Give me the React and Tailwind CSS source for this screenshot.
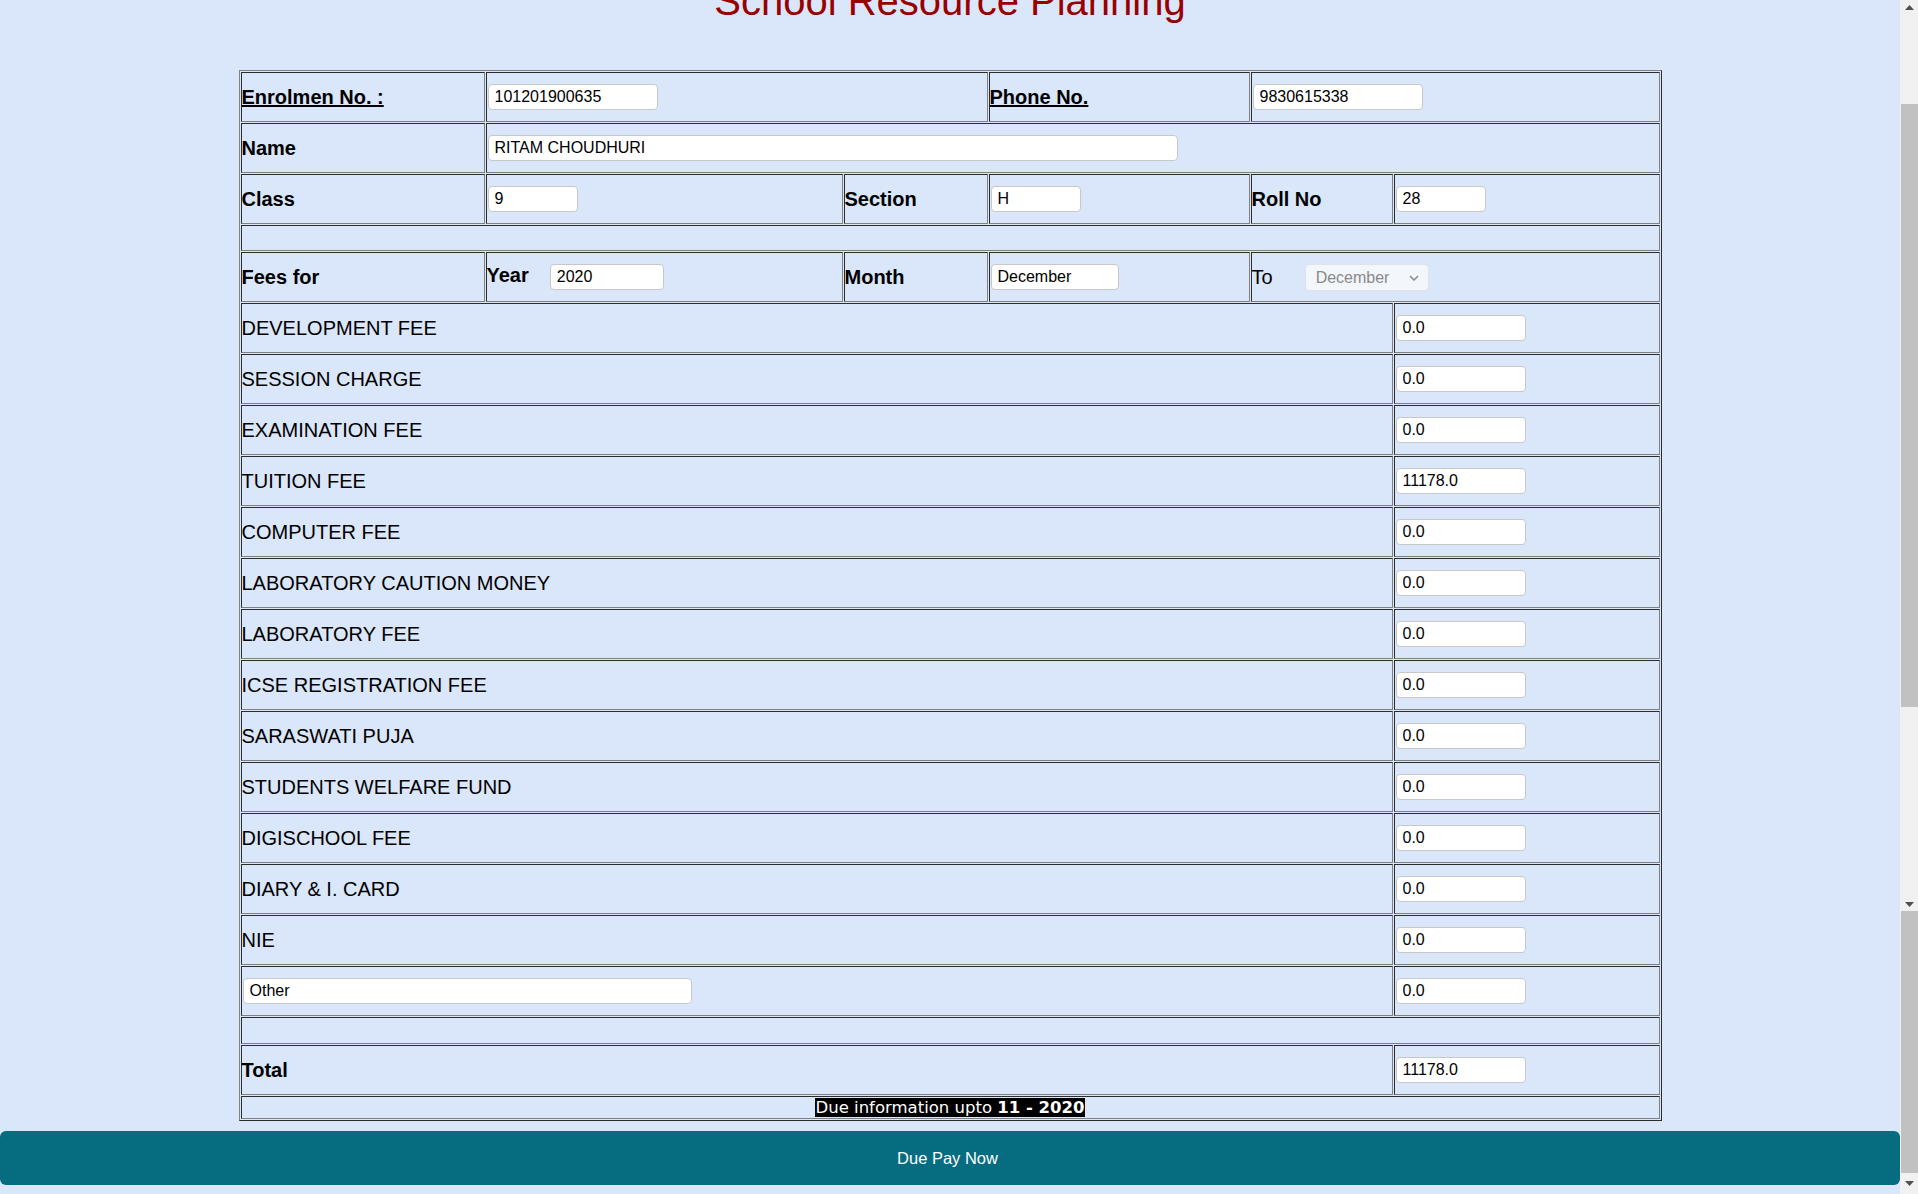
import React from "react";

const td = "border border-[#808080] [border-style:inset] p-px align-middle";
const inp =
  "h-[26px] rounded-[4px] border border-[#c8c8c8] bg-white px-[6px] text-[16px] leading-[24px] text-black outline-none font-['Liberation_Sans',Arial,sans-serif] align-middle";

function Inp({ w, v }) {
  return <input readOnly value={v} className={`${inp} ${w}`} />;
}

const fees = [
  ["DEVELOPMENT FEE", "0.0"],
  ["SESSION CHARGE", "0.0"],
  ["EXAMINATION FEE", "0.0"],
  ["TUITION FEE", "11178.0"],
  ["COMPUTER FEE", "0.0"],
  ["LABORATORY CAUTION MONEY", "0.0"],
  ["LABORATORY FEE", "0.0"],
  ["ICSE REGISTRATION FEE", "0.0"],
  ["SARASWATI PUJA", "0.0"],
  ["STUDENTS WELFARE FUND", "0.0"],
  ["DIGISCHOOL FEE", "0.0"],
  ["DIARY & I. CARD", "0.0"],
  ["NIE", "0.0"],
];

function Tri({ down }) {
  return (
    <svg width="9" height="5" viewBox="0 0 9 5">
      {down ? (
        <polygon points="0,0 9,0 4.5,5" fill="#505050" />
      ) : (
        <polygon points="0,5 9,5 4.5,0" fill="#505050" />
      )}
    </svg>
  );
}

export default function App() {
  return (
    <div className="flex h-[1194px] w-[1918px] overflow-hidden bg-[#dae6f9] font-['Liberation_Sans',Arial,sans-serif] text-black">
      <div className="flex w-[1900px] flex-col">
        <h1 className="mt-[-22px] text-center text-[40px] leading-[46px] font-normal text-[#990000]">
          School Resource Planning
        </h1>
        <div className="mt-[46px]">
          <table className="mx-auto w-[1423px] table-fixed border-separate border-spacing-[1px] border border-[#808080] [border-style:outset] text-[20px] leading-[23px]">
            <colgroup>
              <col className="w-[244px]" />
              <col className="w-[357px]" />
              <col className="w-[144px]" />
              <col className="w-[261px]" />
              <col className="w-[142px]" />
              <col className="w-[266px]" />
            </colgroup>
            <tbody>
              <tr>
                <td className={`${td} h-[50px] pl-0 font-bold underline`}>Enrolmen No. :</td>
                <td className={td} colSpan={2}>
                  <Inp w="w-[170px]" v="101201900635" />
                </td>
                <td className={`${td} pl-0 font-bold underline`}>Phone No.</td>
                <td className={td} colSpan={2}>
                  <Inp w="w-[170px]" v="9830615338" />
                </td>
              </tr>
              <tr>
                <td className={`${td} h-[50px] pl-0 font-bold`}>Name</td>
                <td className={td} colSpan={5}>
                  <Inp w="w-[690px]" v="RITAM CHOUDHURI" />
                </td>
              </tr>
              <tr>
                <td className={`${td} h-[50px] pl-0 font-bold`}>Class</td>
                <td className={td}>
                  <Inp w="w-[90px]" v="9" />
                </td>
                <td className={`${td} pl-0 font-bold`}>Section</td>
                <td className={td}>
                  <Inp w="w-[90px]" v="H" />
                </td>
                <td className={`${td} pl-0 font-bold`}>Roll No</td>
                <td className={td}>
                  <Inp w="w-[90px]" v="28" />
                </td>
              </tr>
              <tr>
                <td className={`${td} h-[26px]`} colSpan={6}></td>
              </tr>
              <tr>
                <td className={`${td} h-[50px] pl-0 font-bold`}>Fees for</td>
                <td className={`${td} pl-0`}>
                  <span className="font-bold">Year</span>
                  <span className="ml-[21px]">
                    <Inp w="w-[114px]" v="2020" />
                  </span>
                </td>
                <td className={`${td} pl-0 font-bold`}>Month</td>
                <td className={td}>
                  <Inp w="w-[128px]" v="December" />
                </td>
                <td className={`${td} pl-0`} colSpan={2}>
                  <div className="flex items-center">
                    <span>To</span>
                    <div className="relative ml-[32px] h-[27px] w-[124px]">
                      <select
                        disabled
                        className="h-[27px] w-[124px] appearance-none rounded-[4px] border border-[#dfe3ea] bg-[#f3f6fb] pl-[10px] text-[16px] text-[#8a8a8a] font-['Liberation_Sans',Arial,sans-serif]"
                        defaultValue="December"
                      >
                        <option>December</option>
                      </select>
                      <svg
                        className="pointer-events-none absolute right-[10px] top-[11px]"
                        width="10"
                        height="6"
                        viewBox="0 0 10 6"
                      >
                        <polyline points="1,1 5,5 9,1" fill="none" stroke="#8a8a8a" strokeWidth="1.5" />
                      </svg>
                    </div>
                  </div>
                </td>
              </tr>
              {fees.map(([label, v]) => (
                <tr key={label}>
                  <td className={`${td} h-[50px] pl-0`} colSpan={5}>
                    {label}
                  </td>
                  <td className={td}>
                    <Inp w="w-[130px]" v={v} />
                  </td>
                </tr>
              ))}
              <tr>
                <td className={`${td} h-[50px]`} colSpan={5}>
                  <Inp w="w-[449px]" v="Other" />
                </td>
                <td className={td}>
                  <Inp w="w-[130px]" v="0.0" />
                </td>
              </tr>
              <tr>
                <td className={`${td} h-[27px]`} colSpan={6}></td>
              </tr>
              <tr>
                <td className={`${td} h-[50px] pl-0 font-bold`} colSpan={5}>
                  Total
                </td>
                <td className={td}>
                  <Inp w="w-[130px]" v="11178.0" />
                </td>
              </tr>
              <tr>
                <td className={`${td} h-[22px] text-center text-[16.5px] leading-[19px]`} colSpan={6}>
                  <span className="bg-black text-white font-['DejaVu_Sans',Verdana,sans-serif]">
                    Due information upto <b>11 - 2020</b>
                  </span>
                </td>
              </tr>
            </tbody>
          </table>
        </div>
        <button className="mt-[10px] h-[54px] w-full rounded-[6px] bg-[#066d80] pr-[5px] text-[16.5px] text-white">
          Due Pay Now
        </button>
      </div>
      <div className="flex w-[18px] flex-col bg-[#f1f1f1]">
        <div className="flex h-[911px] flex-col">
          <div className="flex h-[14px] items-center justify-center">
            <Tri />
          </div>
          <div className="h-[90px]" />
          <div className="ml-[1px] h-[603px] w-[17px] bg-[#c1c1c1]" />
          <div className="flex-1" />
          <div className="flex h-[14px] items-center justify-center">
            <Tri down />
          </div>
        </div>
        <div className="flex flex-1 flex-col">
          <div className="ml-[1px] h-[262px] w-[17px] bg-[#c1c1c1]" />
          <div className="flex flex-1 items-center justify-center">
            <Tri down />
          </div>
        </div>
      </div>
    </div>
  );
}
